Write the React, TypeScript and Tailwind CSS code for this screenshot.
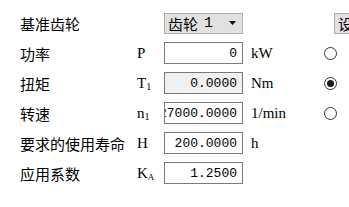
import { ReactNode } from 'react';

const CJK = { fontFamily: '"Noto Sans CJK SC", "Noto Sans", sans-serif' };
const SERIF = { fontFamily: '"Liberation Serif", "Noto Sans CJK SC", serif' };
const MONO = { fontFamily: '"Liberation Mono", "Noto Sans CJK SC", monospace' };

type Row = {
  label: string;
  sym: ReactNode;
  value: string;
  unit?: string;
  disabled?: boolean;
  radio?: 'on' | 'off';
};

const rows: Row[] = [
  { label: '功率', sym: 'P', value: '0', unit: 'kW', radio: 'off' },
  { label: '扭矩', sym: <>T<sub className="text-[10px]">1</sub></>, value: '0.0000', unit: 'Nm', disabled: true, radio: 'on' },
  { label: '转速', sym: <>n<sub className="text-[10px]">1</sub></>, value: '27000.0000', unit: '1/min', radio: 'off' },
  { label: '要求的使用寿命', sym: 'H', value: '200.0000', unit: 'h' },
  { label: '应用系数', sym: <>K<sub className="text-[9px]">A</sub></>, value: '1.2500' },
];

function Radio({ on }: { on: boolean }) {
  return (
    <div className="w-[13px] h-[13px] shrink-0 rounded-full border border-[#333] bg-white flex items-center justify-center">
      {on && <div className="w-[7px] h-[7px] rounded-full bg-[#1a1a1a]" />}
    </div>
  );
}

export default function App() {
  return (
    <div className="w-[349px] h-[207px] bg-white overflow-hidden pt-2 pl-5 text-black">
      <div className="grid grid-cols-[117px_27px_79px_8px_73px_10px_1fr] auto-rows-[30px] items-center">
        {/* header row */}
        <div className="text-[15px] leading-none" style={CJK}>基准齿轮</div>
        <div />
        <div className="h-[21px] bg-[#e1e1e1] border border-[#adadad] flex items-center pl-[3px] pr-[6px]">
          <span className="text-[15px] leading-none" style={CJK}>齿轮</span>
          <span className="text-[15px] leading-none ml-[6px]" style={MONO}>1</span>
          <svg className="ml-auto" width="7" height="4" viewBox="0 0 7 4">
            <path d="M0 0H7L3.5 4Z" fill="#000" />
          </svg>
        </div>
        <div />
        <div />
        <div />
        <div className="h-[21px] bg-[#e1e1e1] border border-r-0 border-[#adadad] flex items-center pl-[3px] overflow-hidden">
          <span className="text-[15px] leading-none whitespace-nowrap" style={CJK}>设置</span>
        </div>

        {rows.map((r) => (
          <>
            <div key={r.label} className="text-[15px] leading-none whitespace-nowrap" style={CJK}>{r.label}</div>
            <div className="text-[15px] leading-none" style={SERIF}>{r.sym}</div>
            <div
              className={`h-[22px] border border-[#7a7a7a] flex items-center justify-end overflow-hidden pr-[5px] ${r.disabled ? 'bg-[#f0f0f0]' : 'bg-white'}`}
            >
              <span className="text-[13px] leading-none whitespace-nowrap" style={MONO}>{r.value}</span>
            </div>
            <div />
            <div className="text-[15px] leading-none" style={SERIF}>{r.unit ?? ''}</div>
            <div className="flex items-center">{r.radio && <Radio on={r.radio === 'on'} />}</div>
            <div />
          </>
        ))}
      </div>
    </div>
  );
}
